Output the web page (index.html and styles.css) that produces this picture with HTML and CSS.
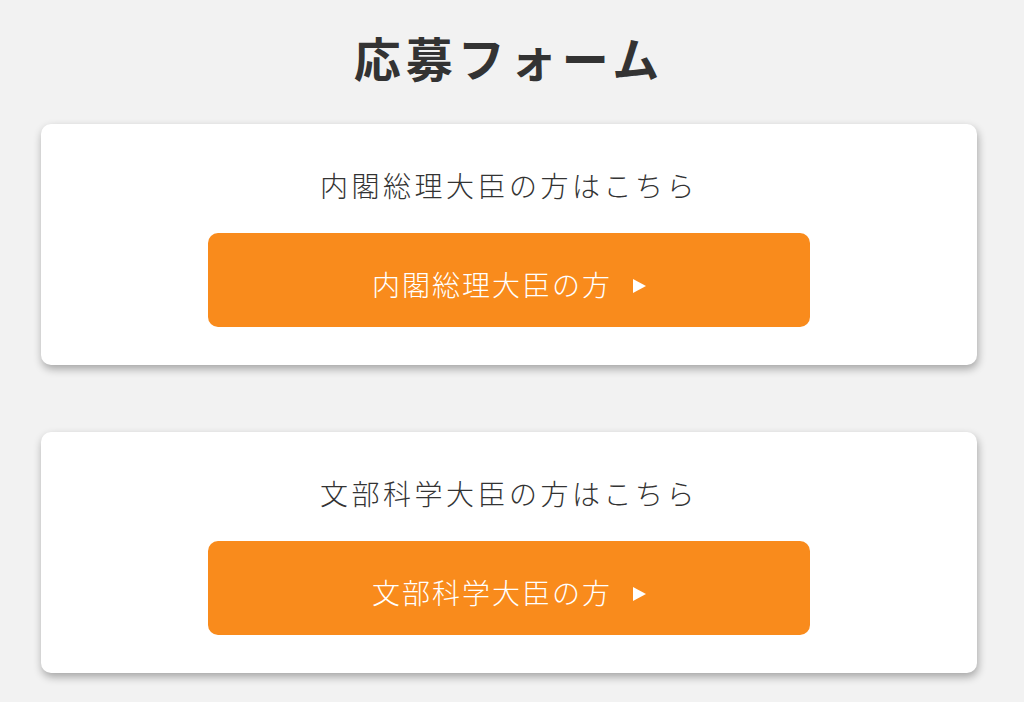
FILE: index.html
```html
<!DOCTYPE html>
<html lang="ja">
<head>
<meta charset="utf-8">
<title>応募フォーム</title>
<link rel="stylesheet" href="styles.css">
</head>
<body>
<main class="page">
  <h1 class="title">応募フォーム</h1>
  <section class="card">
    <p class="card-lead">内閣総理大臣の方はこちら</p>
    <a class="btn" href="#">内閣総理大臣の方<span class="arrow"></span></a>
  </section>
  <section class="card">
    <p class="card-lead">文部科学大臣の方はこちら</p>
    <a class="btn" href="#">文部科学大臣の方<span class="arrow"></span></a>
  </section>
</main>
</body>
</html>
```

FILE: styles.css
```css
html, body {
  margin: 0;
  padding: 0;
  background: #f2f2f2;
}
body {
  font-family: "Noto Sans CJK JP", "Noto Sans", sans-serif;
  color: #333;
}
.page {
  width: 936px;
  margin-left: 41px;
  display: flex;
  flex-direction: column;
  gap: 67px;
  padding-bottom: 40px;
}
.title {
  margin: 22px 0 -34px;
  font-size: 47px;
  line-height: 69px;
  font-weight: 700;
  letter-spacing: 5px;
  text-align: center;
  color: #333;
}
.card {
  background: #fff;
  border-radius: 10px;
  box-shadow: 1px 4px 8px rgba(0, 0, 0, 0.32);
  padding: 40px 0 38px;
  display: flex;
  flex-direction: column;
  align-items: center;
}
.card-lead {
  margin: 0 0 27px;
  font-size: 28px;
  line-height: 42px;
  font-weight: 300;
  letter-spacing: 3.5px;
  color: #333;
}
.btn {
  width: 602px;
  height: 94px;
  border-radius: 10px;
  background: #f98b1c;
  color: #fff;
  text-decoration: none;
  display: flex;
  align-items: center;
  justify-content: center;
  font-size: 28px;
  font-weight: 300;
  letter-spacing: 2px;
  padding-top: 8px;
  box-sizing: border-box;
}
.arrow {
  display: inline-block;
  width: 0;
  height: 0;
  border-top: 7.5px solid transparent;
  border-bottom: 7.5px solid transparent;
  border-left: 13px solid #fff;
  margin-left: 21px;
  margin-top: 3px;
}
```
